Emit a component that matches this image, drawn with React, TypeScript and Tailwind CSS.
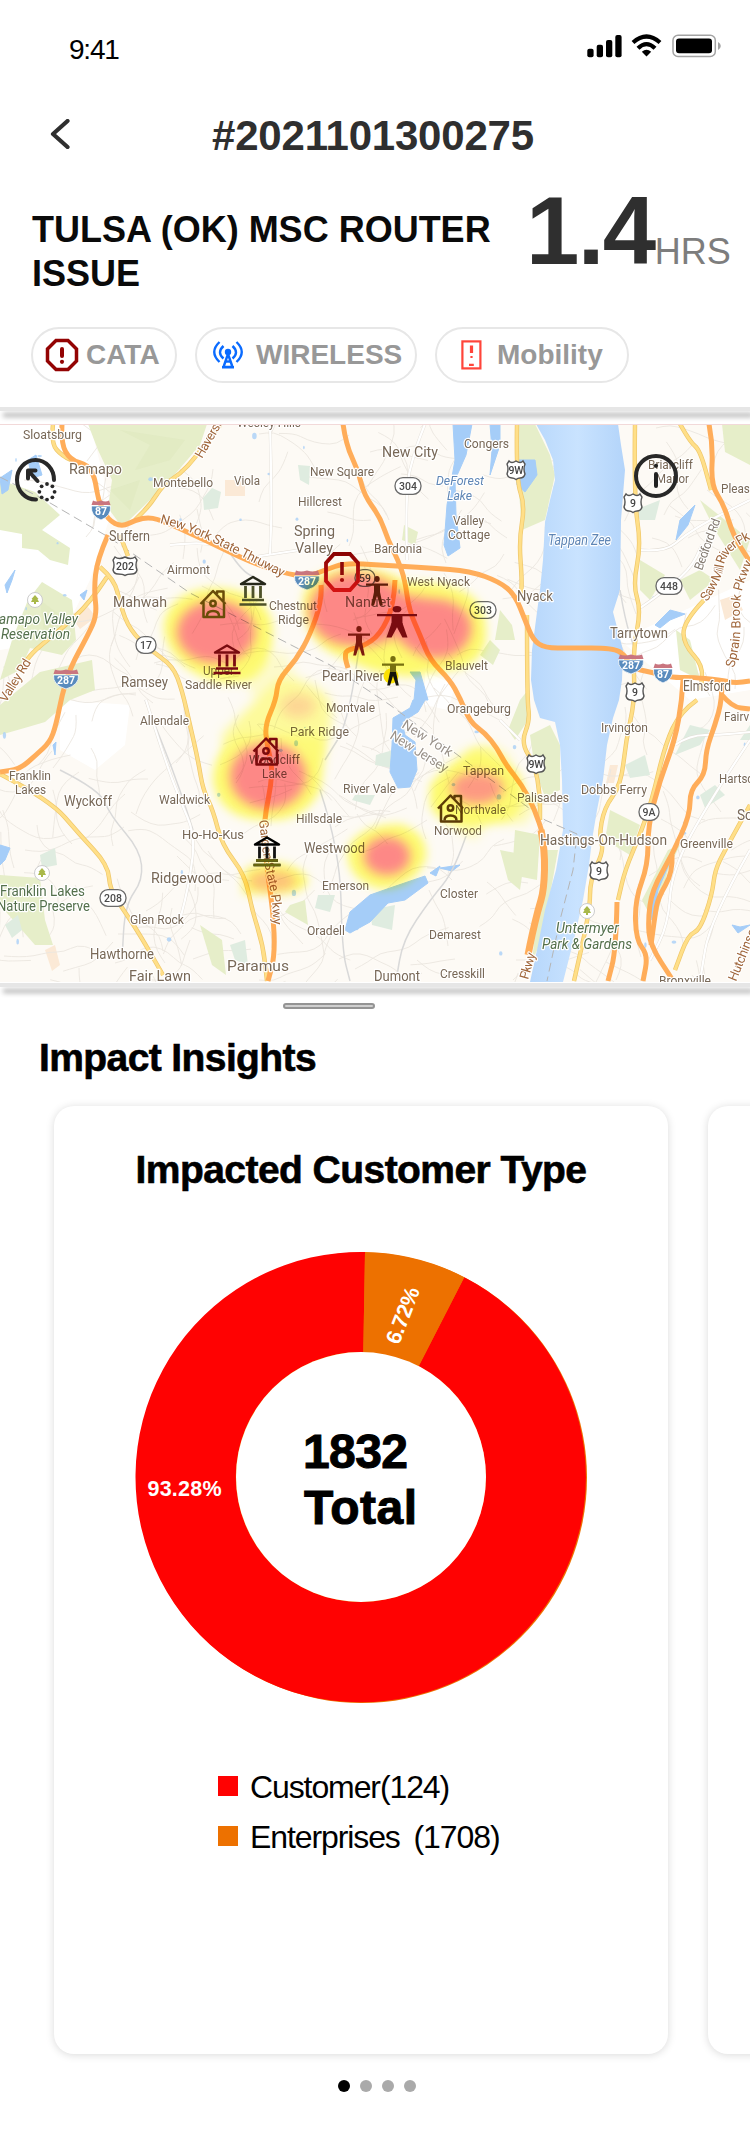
import React from "react";

type Pt = [number, number];

const smooth = (pts: Pt[], close = false) => {
  let d = `M${pts[0][0]} ${pts[0][1]}`;
  for (let i = 1; i < pts.length - 1; i++) {
    const mx = (pts[i][0] + pts[i + 1][0]) / 2;
    const my = (pts[i][1] + pts[i + 1][1]) / 2;
    d += ` Q${pts[i][0]} ${pts[i][1]} ${mx} ${my}`;
  }
  const l = pts[pts.length - 1];
  return d + ` L${l[0]} ${l[1]}` + (close ? "Z" : "");
};

const parse = (s: string): Pt[] => s.split(" ").map((p) => p.split(",").map(Number) as Pt);

const orangeRoads = [
  "62,424 61,443 70,460 88,465 95,478 98,500 108,520 122,527 135,520 150,517 165,522 205,540 250,562 283,573 307,577 325,570 345,563 380,565 430,568 470,571 500,582 515,595 525,620 533,640 545,648 570,648 613,648 625,655 631,668 650,672 675,678 690,677 720,680 735,683 750,681",
  "343,424 346,445 358,470 364,495 380,517 388,540 398,560 405,580 409,610 420,635 430,660 450,680 460,698 470,722 485,733 497,748 506,765 522,785 535,810 543,835",
  "321,585 322,600 310,635 296,660 278,680 276,700 265,725 267,745 272,765 271,785 266,810 264,830 267,870 273,910 275,955 268,981",
  "108,535 97,560 94,590 97,615 88,635 70,668 62,695 56,725 50,742 36,755 20,769 0,772",
  "395,580 394,605 380,635 362,647 346,650 345,658 348,668",
  "709,424 713,445 711,485 724,505 733,535 750,562",
  "683,680 682,700 675,740 660,780 648,825 648,865 635,900 636,940 648,955 643,981",
  "722,682 722,700 715,725 706,750 705,775 690,790 690,815 672,855 652,890 648,920 650,945 672,979",
  "672,855 673,872 658,898 655,915 651,945",
  "617,902 616,950 608,981",
  "722,695 732,707 750,709",
];
const yellowRoads = [
  "53,424 51,443 62,456 80,464",
  "221,424 195,458 180,474 163,485 150,505 135,520",
  "100,567 115,580 120,605 130,630 150,650 173,666 182,690 190,725 198,760 203,790 213,810 222,845 245,875 252,910 263,945 267,981",
  "107,577 90,603 60,630 35,650 25,662",
  "0,774 50,800 80,835 108,865 110,890 125,912 140,935 163,975",
  "517,424 516,480 525,505 519,540 522,580 521,595",
  "527,615 527,700 530,720 521,743 535,765 540,795 540,820",
  "635,424 634,500 641,545 633,585 641,610 633,650 635,700 626,740 621,785 604,808 599,838 604,850 590,880 590,910 574,981",
  "680,424 690,442 700,450 711,490",
  "704,600 683,622 684,645 703,665 701,690",
  "697,700 680,712 665,745 652,800 640,835 625,870 618,900",
  "750,805 725,850 715,870 712,895 700,930 688,935 675,970",
  "120,535 128,556",
];
const whiteRoads = [
  "146,700 165,760 180,800 195,835 190,880 180,920",
  "407,560 405,490 415,450 425,424",
  "640,550 665,552 685,535 710,520 750,500",
  "640,608 655,598 690,570 702,545",
  "675,745 690,735 720,735 750,732",
  "750,740 710,800 672,870 668,925 650,960",
  "170,545 215,540 240,560 260,556 300,550",
  "270,424 272,500 270,555",
  "500,720 520,740",
  "750,850 710,920 700,981",
];
const grayRoads = [
  "225,545 240,570 260,580",
  "145,700 165,750 180,790 193,830",
  "60,770 100,790 110,815 140,850 143,880 125,905 122,960",
  "620,590 625,620 635,650",
  "320,790 340,850 342,950 350,981",
  "468,830 455,870 430,900 403,940 396,981",
  "360,640 350,720 325,760",
];
const greens = [
  "88,424 207,424 200,445 170,480 150,500 122,527 108,508 112,480 98,450",
  "0,480 35,492 60,515 42,530 70,548 68,565 50,560 38,550 22,548 22,534 0,530",
  "28,600 42,582 72,600 76,640 62,655 30,648 20,670 0,680 12,640",
  "40,672 92,660 95,690 70,700 45,722 28,727 0,735 0,705",
  "535,424 550,455 555,475 545,520 522,530 520,505 518,480 516,424",
  "0,875 40,878 45,920 53,945 35,945 0,905",
  "722,424 750,424 750,465 725,452",
  "500,610 512,625 515,640 495,640",
  "530,735 550,725 560,745 560,790 545,797 535,770",
  "515,830 540,835 537,880 512,875",
  "545,850 558,850 542,940 532,960",
  "680,580 700,570 715,580 690,600",
  "500,850 525,855 520,890 508,880",
  "490,640 500,650 493,665 480,655",
  "700,500 750,540 740,570 715,530",
  "668,850 680,845 668,870 655,925 642,900",
  "676,630 690,640 700,680 680,670",
  "640,560 665,575 650,600 640,590",
  "610,810 640,825 630,855 605,840",
  "404,525 418,532 415,545 402,540",
  "290,905 305,900 308,925 285,912",
  "520,700 528,690 528,720 515,740 508,730",
  "200,925 222,940 226,975 212,965",
];
const paleGreens = [
  "203,498 212,488 221,492 218,508 204,510",
  "298,465 310,466 309,485 300,480",
  "376,755 393,750 393,768 375,765",
  "355,795 375,795 370,805 352,800",
  "40,855 55,848 57,865 42,868",
  "5,925 18,915 22,930 12,938",
  "635,510 660,500 655,520 640,520",
  "625,765 645,755 650,775 630,778",
  "690,725 710,730 700,745 675,755",
  "700,795 715,785 725,795 705,808",
  "740,740 750,725 750,740",
  "230,945 245,940 248,965 235,960",
  "318,895 335,895 330,912 315,908",
  "370,910 395,905 392,930 372,925",
];
const lakes = [
  "453,424 472,424 466,455 455,480 456,515 460,548 448,556 444,545 447,505 455,460",
  "490,424 500,424 500,445 490,475 492,450",
  "393,718 410,708 413,700 425,700 418,712 402,722 405,735 415,742 417,770 410,787 398,788 390,772 392,745",
  "345,930 350,912 370,895 390,888 425,876 428,883 405,900 388,903 370,922 350,933",
  "430,873 440,866 436,876",
  "440,868 460,865 452,871",
  "516,460 535,460 537,475 525,492 517,485",
  "28,460 36,455 42,475 32,478",
  "0,478 12,470 8,490 2,494",
  "0,845 10,848 5,860 0,865",
  "655,625 670,610 685,614 670,620 660,628",
  "680,520 695,505 688,525 676,540",
  "665,865 670,862 658,890 652,920 650,905",
  "414,700 416,680 410,672 420,672 428,700",
  "732,925 740,927 750,925 738,933",
  "5,585 15,570 12,580 7,593",
  "80,595 87,590 84,600",
  "53,745 56,742 55,755",
];

const town = "#786857";
const blueText = "#5f86b5";
const greenText = "#54704c";
type Label = [string, number, number, number, number, string?, boolean?];
const labels: Label[] = [
  ["Sloatsburg", 23, 439, 59, 12.5], ["Ramapo", 69, 474, 53, 15], ["Montebello", 153, 487, 60, 12.5],
  ["Viola", 234, 485, 26, 12.5], ["Suffern", 109, 541, 41, 14], ["Airmont", 167, 574, 43, 12.5],
  ["Mahwah", 113, 607, 54, 15], ["Ramapo Valley", -9, 624, 87, 14, greenText, true],
  ["Reservation", 1, 639, 69, 14, greenText, true], ["Ramsey", 121, 687, 47, 14],
  ["Upper", 203, 675, 31, 12.5], ["Saddle River", 185, 689, 67, 12.5], ["Allendale", 140, 725, 49, 12.5],
  ["Franklin", 9, 780, 42, 12.5], ["Lakes", 15, 794, 31, 12.5], ["Wyckoff", 64, 806, 48, 14],
  ["Waldwick", 159, 804, 51, 13], ["Ho-Ho-Kus", 182, 839, 62, 13], ["Ridgewood", 151, 883, 71, 15],
  ["Franklin Lakes", 0, 896, 85, 14, greenText], ["Nature Preserve", -3, 911, 93, 14, greenText],
  ["Glen Rock", 130, 924, 54, 13], ["Hawthorne", 90, 959, 64, 14], ["Fair Lawn", 129, 981, 62, 14],
  ["Paramus", 227, 971, 62, 15.5], ["Wesley Hills", 237, 427, 64, 12.5], ["New City", 382, 457, 56, 15],
  ["New Square", 310, 476, 64, 13], ["Congers", 464, 448, 45, 13], ["Hillcrest", 298, 506, 44, 13],
  ["Spring", 294, 536, 41, 15], ["Valley", 295, 553, 38, 15],
  ["DeForest", 436, 485, 48, 13, blueText, true], ["Lake", 447, 500, 25, 13, blueText, true],
  ["Valley", 453, 525, 31, 13], ["Cottage", 448, 539, 42, 13], ["Bardonia", 374, 553, 48, 12.5],
  ["West Nyack", 407, 586, 63, 13], ["Chestnut", 269, 610, 48, 13], ["Ridge", 278, 624, 31, 13],
  ["Nanuet", 345, 607, 46, 14.5], ["Pearl River", 322, 681, 62, 14], ["Blauvelt", 445, 670, 43, 13],
  ["Briarcliff", 648, 469, 45, 13], ["Manor", 656, 483, 33, 13], ["Pleasantville", 721, 493, 66, 13],
  ["Tappan Zee", 548, 545, 63, 14, blueText, true], ["Nyack", 517, 601, 36, 14.5], ["Tarrytown", 610, 638, 58, 14.5],
  ["Elmsford", 683, 691, 48, 14], ["Montvale", 326, 712, 49, 12.5], ["Park Ridge", 290, 736, 59, 13],
  ["Woodcliff", 249, 764, 51, 13], ["Lake", 262, 778, 25, 13], ["River Vale", 343, 793, 53, 13],
  ["Hillsdale", 296, 823, 46, 13], ["Westwood", 304, 853, 61, 14], ["Emerson", 322, 890, 47, 13],
  ["Oradell", 307, 935, 38, 13], ["Dumont", 374, 981, 46, 14], ["Demarest", 429, 939, 52, 13],
  ["Cresskill", 440, 978, 45, 13], ["Closter", 440, 898, 38, 13], ["Norwood", 434, 835, 48, 13],
  ["Northvale", 455, 814, 51, 13], ["Tappan", 463, 775, 41, 13], ["Orangeburg", 447, 713, 64, 13],
  ["Palisades", 517, 802, 52, 12.5], ["Irvington", 601, 732, 47, 13], ["Dobbs Ferry", 581, 794, 66, 13.5],
  ["Hastings-On-Hudson", 540, 845, 127, 14], ["Greenville", 680, 848, 53, 13], ["Fairview", 724, 721, 43, 13],
  ["Hartsdale", 719, 783, 50, 13], ["Scarsdale", 737, 820, 60, 14.5], ["Untermyer", 556, 933, 63, 14, greenText, true],
  ["Park & Gardens", 542, 949, 90, 14, greenText, true], ["Bronxville", 659, 985, 52, 13],
];

const rnd = (() => {
  let s = 91;
  return () => ((s = (s * 16807) % 2147483647) / 2147483647);
})();
const streets = Array.from({ length: 330 }, () => {
  let x = rnd() * 770 - 10;
  let y = 415 + rnd() * 570;
  if (x < 95 && y < 640) x += 120;
  let a = rnd() * 6.28;
  const pts: Pt[] = [[x, y]];
  const n = 3 + Math.floor(rnd() * 5);
  for (let i = 0; i < n; i++) {
    a += (rnd() - 0.5) * 1.3;
    x += Math.cos(a) * 15;
    y += Math.sin(a) * 15;
    pts.push([Math.round(x), Math.round(y)]);
  }
  return smooth(pts);
}).join(" ");
const ponds = Array.from({ length: 45 }, () => [rnd() * 750, 430 + rnd() * 545, 0.8 + rnd() * 1.6, 1 + rnd() * 2.4]);

const Us = ({ x, y, n }: { x: number; y: number; n: string }) => {
  const w = n.length > 2 ? 12 : 9;
  return (
    <g transform={`translate(${x} ${y})`}>
      <path
        d={`M${-w + 2} -9 Q${-w / 2} -6 0 -9 Q${w / 2} -6 ${w - 2} -9 L${w} -6 Q${w - 2} -1 ${w} 4 Q${w - 1} 8 ${w - 5} 8 Q2 8 0 9.5 Q-2 8 ${-w + 5} 8 Q${-w + 1} 8 ${-w} 4 Q${-w + 2} -1 ${-w} -6Z`}
        fill="#fff" stroke="#555" strokeWidth="1.4"
      />
      <text y="4" textAnchor="middle" fontSize="10.5" fontWeight="500" fill="#444">{n}</text>
    </g>
  );
};
const Oval = ({ x, y, n }: { x: number; y: number; n: string }) => {
  const w = n.length > 2 ? 13 : 10;
  return (
    <g transform={`translate(${x} ${y})`}>
      <rect x={-w} y="-8.3" width={w * 2} height="16.6" rx="8" fill="#fff" stroke="#6a6a6a" strokeWidth="1.3" />
      <text y="3.8" textAnchor="middle" fontSize="10.5" fontWeight="500" fill="#4a4a4a">{n}</text>
    </g>
  );
};
const Interstate = ({ x, y, n }: { x: number; y: number; n: string }) => {
  const w = n.length > 2 ? 12.5 : 9.5;
  return (
    <g transform={`translate(${x} ${y})`}>
      <path d={`M${-w} -4 H${w} Q${w + 1} 6 0 10 Q${-w - 1} 6 ${-w} -4Z`} fill="#5a8cbe" stroke="#fff" strokeWidth="0.8" />
      <path d={`M${-w} -5 L${-w + 1.5} -9.5 Q${-w / 2} -7.5 0 -9.5 Q${w / 2} -7.5 ${w - 1.5} -9.5 L${w} -5Z`} fill="#c9757f" />
      <text y="5" textAnchor="middle" fontSize="10.5" fontWeight="700" fill="#fff">{n}</text>
    </g>
  );
};

const House = ({ x, y, c }: { x: number; y: number; c: string }) => (
  <g transform={`translate(${x} ${y})`} fill="none" stroke={c} strokeWidth="2.5">
    <path d="M0.5 15 L13 2 L25.500 15 M3.5 12.5 V28 H24 V12.5 M17 5 V2.5 H23.5 V12" strokeLinejoin="round" />
    <circle cx="13" cy="14.5" r="2.7" />
    <path d="M7 27 Q7 22 13 22 Q19 22 19 27" />
  </g>
);
const Bank = ({ x, y, c, roof }: { x: number; y: number; c: string; roof: string }) => (
  <g transform={`translate(${x} ${y})`}>
    <path d="M2 9 L14 2 L26 9Z" fill="none" stroke={roof} strokeWidth="2.4" strokeLinejoin="round" />
    <path d="M6.5 11 V23 M14 11 V23 M21.5 11 V23" stroke={c} strokeWidth="2.8" />
    <path d="M3 25 H25 M0.5 29.5 H27.5" stroke={c} strokeWidth="2.4" />
  </g>
);
const Person = ({ x, y, w, h, c, leg }: { x: number; y: number; w: number; h: number; c: string; leg?: string }) => (
  <svg x={x - w / 2} y={y} width={w} height={h} viewBox="0 0 22 30" preserveAspectRatio="none">
    <ellipse cx="11" cy="3" rx={w > 30 ? 2.4 : 2.7} ry="2.9" fill={c} />
    <path d="M0 7.6 H22 V9.7 H14 V17 H8 V9.7 H0Z" fill={c} />
    <path d="M8 16 H14 L16.800 29.5 H14 L11 20 L8 29.5 H5.2Z" fill={leg || c} />
  </svg>
);

const MapArt = () => (
  <svg className="isolate block h-[558px] w-[750px]" viewBox="0 424 750 558" fontFamily="Roboto, sans-serif">
    <defs>
      <filter id="b4" x="-30%" y="-30%" width="160%" height="160%"><feGaussianBlur stdDeviation="5" /></filter>
      <filter id="b6" x="-50%" y="-50%" width="200%" height="200%"><feGaussianBlur stdDeviation="5.5" /></filter>
      <linearGradient id="river" x1="0" x2="1" y1="0" y2="0">
        <stop offset="0" stopColor="#b7d7fb" /><stop offset="0.5" stopColor="#c9e3ff" /><stop offset="1" stopColor="#b3d4fa" />
      </linearGradient>
      <linearGradient id="alert" x1="0" x2="0" y1="0" y2="1">
        <stop offset="0" stopColor="#8a0303" /><stop offset="1" stopColor="#d31212" />
      </linearGradient>
      <path id="thruway" d="M160 523 Q185 529 212 542 T284 578" />
      <path id="garden" d="M259 820 Q263 860 268 880 T273 926" />
      <path id="saw" d="M707 602 Q722 580 724 565 T753 538" />
      <path id="sprain" d="M734 668 Q742 640 740 615 T754 560" />
    </defs>
    <rect x="0" y="424" width="750" height="558" fill="#fdfaf5" />
    <path d="M0 424 H90 L112 510 L90 580 L60 640 L0 650Z M60 700 L130 705 L125 745 L95 770 L60 750Z M620 640 L750 580 V690 L690 700Z M425 672 L455 685 L448 710 L425 705Z" fill="#fff" />
    <path d="M225 480 h20 v16 h-20z M70 615 l18 -8 l8 10 l-16 12z M720 600 l15 -5 l8 15 l-18 10z M45 950 l10 -5 l5 20 l-8 6z M610 765 l8 0 l-4 18 l-8 0z" fill="#fbe9d6" />
    <path d={streets} fill="none" stroke="#ebe7e0" strokeWidth="0.9" />
    {greens.map((g) => <polygon key={g} points={g} fill="#e6eec9" />)}
    {paleGreens.map((g) => <polygon key={g} points={g} fill="#dfece0" />)}
    <path d="M120 430 L150 445 L135 470 L170 460 L185 440Z M110 490 L140 480 L130 510Z M40 600 L60 615 L45 640Z" fill="#dde8bd" opacity="0.5" />
    {ponds.map((p, i) => <ellipse key={i} cx={p[0]} cy={p[1]} rx={p[2]} ry={p[3]} fill="#a9cff7" opacity="0.8" />)}
    {lakes.map((l) => <polygon key={l} points={l} fill="#a5cdf8" strokeLinejoin="round" stroke="#a5cdf8" />)}
    <polygon
      points="536,424 545,440 553,460 555,480 550,500 545,522 543,560 540,590 537,612 534,635 532,650 531,680 534,700 540,718 555,722 560,745 562,780 563,830 556,870 545,910 537,950 530,982 563,982 575,935 583,900 589,865 592,840 597,810 603,780 607,745 613,718 619,700 622,680 623,650 613,612 620,590 621,520 625,470 621,445 618,424"
      fill="url(#river)"
    />
    {grayRoads.map((r) => <path key={r} d={smooth(parse(r))} fill="none" stroke="#d9d9d9" strokeWidth="1.5" />)}
    {whiteRoads.map((r) => <path key={r} d={smooth(parse(r))} fill="none" stroke="#e3ded6" strokeWidth="3" />)}
    {whiteRoads.map((r) => <path key={r + "w"} d={smooth(parse(r))} fill="none" stroke="#fff" strokeWidth="2.2" />)}
    <path d="M0 477 L45 500 L110 538 L190 593 L330 665 L390 705 L455 753 L545 820 L577 834 L573 870 L560 920 L547 981" fill="none" stroke="#b5b5b5" strokeWidth="1" strokeDasharray="9 5" />
    {yellowRoads.map((r) => <path key={r} d={smooth(parse(r))} fill="none" stroke="#efc76a" strokeWidth="4.4" />)}
    {yellowRoads.map((r) => <path key={r + "i"} d={smooth(parse(r))} fill="none" stroke="#ffdf88" strokeWidth="3" />)}
    {orangeRoads.map((r) => <path key={r} d={smooth(parse(r))} fill="none" stroke="#ffad5a" strokeWidth="5" strokeLinejoin="round" />)}
    <path d={smooth(parse("541,830 545,850 544,890 538,910 532,935 528,955"))} fill="none" stroke="#ffad5a" strokeWidth="7" />

    <g stroke="#fff" strokeWidth="2.4" paintOrder="stroke" strokeLinejoin="round">
      {labels.map(([t, x, y, w, s, c, it], i) => (
        <text key={i} x={x} y={y} fontSize={s} textLength={w} lengthAdjust="spacingAndGlyphs" fill={c || town} fontStyle={it ? "italic" : "normal"}>{t}</text>
      ))}
      <g fill="#9a928a" fontSize="13.5">
        <text transform="translate(401 727) rotate(32)" textLength="57">New York</text>
        <text transform="translate(389 738) rotate(32)" textLength="66">New Jersey</text>
      </g>
      <g fill="#a0673c" fontSize="13">
        <text><textPath href="#thruway" textLength="134">New York State Thruway</textPath></text>
        <text><textPath href="#garden" textLength="106">Garden State Pkwy</textPath></text>
        <text><textPath href="#saw" textLength="80">Saw Mill River Pk</textPath></text>
        <text><textPath href="#sprain" textLength="108">Sprain Brook Pkwy</textPath></text>
        <text transform="translate(202 459) rotate(-60)" textLength="60">Haverstraw</text>
        <text transform="translate(6 703) rotate(-58)" textLength="48">Valley Rd</text>
        <text transform="translate(528 980) rotate(-74)" textLength="27">Pkwy</text>
        <text transform="translate(736 982) rotate(-68)" textLength="62">Hutchinson</text>
      </g>
      <text transform="translate(702 571) rotate(-70)" fontSize="12.5" fill="#857c72" textLength="54">Bedford Rd</text>
    </g>

    <Us x={125} y={566} n="202" /><Us x={516} y={470} n="9W" /><Us x={633} y={503} n="9" />
    <Us x={635} y={692} n="9" /><Us x={536} y={764} n="9W" /><Us x={599} y={871} n="9" />
    <Oval x={146} y={645} n="17" /><Oval x={113} y={898} n="208" /><Oval x={408} y={486} n="304" />
    <Oval x={365} y={578} n="59" /><Oval x={483} y={610} n="303" /><Oval x={669} y={586} n="448" /><Oval x={649} y={812} n="9A" />
    <Interstate x={101} y={510} n="87" /><Interstate x={66} y={679} n="287" /><Interstate x={307} y={580} n="287" />
    <Interstate x={631} y={664} n="287" /><Interstate x={663} y={673} n="87" />
    {[[35, 600], [42, 873], [587, 911]].map(([x, y]) => (
      <g key={x}>
        <circle cx={x} cy={y} r="7.5" fill="#fff" stroke="#ccc" />
        <path d={`M${x} ${y - 5} l3.5 4 l-1 0 l1.5 3 h-3 v2 h-2 v-2 h-3 l1.5 -3 l-1 0Z`} fill="#a9b84a" />
      </g>
    ))}

    <g className="opacity-95 mix-blend-multiply">
      <g filter="url(#b4)" fill="#ffff6a">
        <path d="M164 625 Q168 592 212 588 Q262 588 272 622 Q276 665 250 680 Q220 690 190 670 Q164 650 164 625Z" />
        <path d="M303 600 Q306 572 350 567 Q385 568 408 583 Q445 580 470 595 Q490 610 485 645 Q478 670 440 671 L408 677 Q365 672 345 658 Q303 645 303 600Z" />
        <path d="M213 782 Q212 752 240 735 H322 Q325 765 320 790 Q305 822 266 820 Q220 820 213 782Z" />
        <path d="M348 848 Q360 824 400 824 Q428 832 426 858 Q415 888 380 889 Q345 880 348 848Z" />
        <path d="M430 785 Q445 765 475 748 Q505 750 522 780 Q530 812 505 822 L470 828 Q438 825 430 805Z" />
        <path d="M243 872 Q260 858 285 864 Q305 870 308 880 Q306 893 280 894 H243Z" />
      </g>
      <g filter="url(#b6)" fill="#ffff7a" fillOpacity="0.75">
        <path d="M222 735 Q250 705 278 680 Q310 675 330 700 Q335 725 322 760 H225Z" />
        <path d="M240 670 L285 650 L298 680 L255 700Z" fillOpacity="0.35" />
        <path d="M450 825 L475 840 L485 822Z M505 790 L540 800 L525 825 L500 822Z M455 755 L490 743 L515 760Z" fillOpacity="0.5" />
      </g>
      <g filter="url(#b6)" fill="#ff8585">
        <ellipse cx="216" cy="632" rx="39" ry="31" />
        <path d="M309 612 Q312 582 345 573 Q385 573 402 594 Q420 598 445 600 Q475 610 471 634 Q462 660 430 658 Q405 650 396 636 Q370 652 335 643 Q312 635 309 612Z" />
        <ellipse cx="268" cy="776" rx="38" ry="33" />
        <ellipse cx="387" cy="856" rx="23" ry="19" />
        <ellipse cx="477" cy="788" rx="26" ry="16" fillOpacity="0.85" />
        <ellipse cx="272" cy="881" rx="24" ry="10" fillOpacity="0.5" />
        <ellipse cx="298" cy="706" rx="17" ry="12" fillOpacity="0.3" />
      </g>
    </g>

    <House x={200} y={589} c="#6a4c08" />
    <House x={253} y={736.5} c="#7c0a0c" />
    <House x={437.5} y={793.5} c="#5c3c06" />
    <Bank x={239} y={575} c="#4e5228" roof="#26271a" />
    <Bank x={213} y={643.5} c="#7a0b10" roof="#7a0b10" />
    <g>
      <Bank x={253} y={835.5} c="#111" roof="#000" />
      <path d="M256 860.5 H278 M253.5 865 H280.5" stroke="#67660d" strokeWidth="2.4" />
    </g>
    <circle cx="391" cy="676" r="7.5" fill="#fbe000" />
    <Person x={377} y={576} w={22} h={30} c="#5d1d0a" />
    <Person x={397} y={606} w={40} h={32} c="#7a0c10" />
    <Person x={359} y={626} w={22} h={30} c="#7c1a0e" />
    <Person x={393} y={656} w={22} h={30} c="#77700f" leg="#14140a" />
    <path d="M334 554 H350 L358 563 V581 L350 590 H334 L326 581 V563Z" fill="none" stroke="url(#alert)" strokeWidth="3.8" />
    <path d="M342 562 V575" stroke="#8d0808" strokeWidth="3.6" /><circle cx="342" cy="580" r="2.1" fill="#a60b0b" />

    <g fill="none" stroke="#282828" strokeWidth="4" strokeLinecap="round" strokeLinejoin="round">
      <path d="M36 499.5 A18.5 19.8 0 1 1 54 480" />
      <path d="M28 478.5 V470.5 H35.5 M29 471.5 L37.5 481" />
    </g>
    {Array.from({ length: 8 }, (_, i) => (
      <circle key={i} cx={47 + 7.6 * Math.cos((i * Math.PI) / 4)} cy={491.8 + 7.8 * Math.sin((i * Math.PI) / 4)} r="1.9" fill="#282828" />
    ))}
    <circle cx="656" cy="476" r="20" fill="none" stroke="#282828" strokeWidth="4" />
    <circle cx="656" cy="465.8" r="2.1" fill="#222" />
    <path d="M656 474 V486" stroke="#222" strokeWidth="4" strokeLinecap="round" />
    <path d="M0 424.5 H750" stroke="#f2d9d9" />
  </svg>
);

const Donut = () => (
  <svg className="block h-[454px] w-[454px]" viewBox="134 1250 454 454" fontFamily="'Liberation Sans', sans-serif">
    <circle cx="361.8" cy="1477.8" r="225.2" fill="#ed7100" />
    <path fill="#ff0202" d="M365 1252 A225.2 225.2 0 1 0 464.3 1277.2 L418.7 1366.2 A125 125 0 1 1 363.3 1352Z" />
    <path d="M363.3 1352 L365 1252 A225 225 0 0 1 464.3 1277.2 L418.7 1366.2Z" fill="#ed7100" />
    <circle cx="361" cy="1477" r="125" fill="#fff" />
    <g fontWeight="700" fontSize="48" stroke="#000" strokeWidth="1">
      <text x="303" y="1468.3" textLength="105">1832</text>
      <text x="304" y="1524" textLength="113">Total</text>
    </g>
    <g fontWeight="700" fontSize="21.5" fill="#fff">
      <text x="147.5" y="1496" textLength="74">93.28%</text>
      <text transform="translate(399 1345.5) rotate(-69)" textLength="59">6.72%</text>
    </g>
  </svg>
);

const Chip = ({ className, children }: { className: string; children: React.ReactNode }) => (
  <div className={`flex h-[56px] items-center rounded-full border-2 border-[#e7e7e7] text-[28px] leading-[32px] font-bold text-[#989898] ${className}`}>{children}</div>
);

const Divider = () => <div className="h-[4px] w-full shrink-0 bg-[#e6e6e6] shadow-[3px_6px_5px_rgba(0,0,0,0.3)]" />;

export default function App() {
  return (
    <div className="flex h-[2148px] w-[750px] flex-col overflow-hidden bg-white font-['Liberation_Sans',Arial,sans-serif] text-black">
      <div className="flex h-[88px] shrink-0 items-start justify-between pt-[34px] pr-[29px] pl-[69px]">
        <span className="pt-[2px] text-[28px] leading-[28px] tracking-[-1.2px]">9:41</span>
        <svg className="h-[24px] w-[135px]" viewBox="586 34 135 24">
          <rect x="587.3" y="48.8" width="6.3" height="8.4" rx="2" />
          <rect x="596.7" y="44.8" width="6.3" height="12.4" rx="2" />
          <rect x="606" y="40" width="6.3" height="17.2" rx="2" />
          <rect x="615.3" y="35" width="6.3" height="22.2" rx="2" />
          <g fill="none" stroke="#000" strokeWidth="4.2">
            <path d="M633 42.5 Q646.500 30.500 660 42.500" />
            <path d="M638 48.3 Q646.500 40 655 48.300" />
          </g>
          <path d="M641.8 51.8 Q646.500 47.800 651.200 51.800 L646.500 56.500Z" />
          <rect x="673" y="35.3" width="42.3" height="21.2" rx="5" fill="none" stroke="#a3a3a3" strokeWidth="1.5" />
          <rect x="676" y="38.5" width="36" height="14.8" rx="3" />
          <path d="M718 42 Q720.8 43.3 720.8 46 Q720.8 48.7 718 50Z" fill="#a3a3a3" />
        </svg>
      </div>
      <div className="flex h-[95px] shrink-0 items-start pt-[24px] pl-[49px]">
        <svg className="mt-[7px] h-[30px] w-[24px]" viewBox="49 119 24 30" fill="none" stroke="#2f2f2f" strokeWidth="4.2" strokeLinecap="round" strokeLinejoin="round">
          <path d="M67.5 121 L53 134 L67.500 147" />
        </svg>
        <h1 className="ml-[139px] text-[42px] leading-[48px] font-bold tracking-[-0.2px] text-[#2f2f2f]">#2021101300275</h1>
      </div>
      <div className="flex h-[144px] shrink-0 items-start pl-[32px]">
        <h2 className="w-[494px] pt-[25px] text-[36px] leading-[44px] font-bold text-[#0a0a0a]">TULSA (OK) MSC ROUTER ISSUE</h2>
        <div className="flex items-baseline">
          <span className="text-[96px] leading-[96px] font-bold tracking-[-1.6px] text-[#2f2f2f]">1.4</span>
          <span className="text-[36px] text-[#7d7d7d]">HRS</span>
        </div>
      </div>
      <div className="flex h-[80px] shrink-0 items-start gap-[18px] pl-[31px]">
        <Chip className="w-[146px] gap-[7px] pl-[12px]">
          <svg className="h-[34px] w-[34px] shrink-0" viewBox="0 0 34 34">
            <path d="M11 2.5 H23 L31.5 11 V23 L23 31.5 H11 L2.5 23 V11Z" fill="none" stroke="#930303" strokeWidth="3.5" />
            <path d="M17 11 V18" stroke="#930303" strokeWidth="4" strokeLinecap="round" />
            <circle cx="17" cy="23.8" r="2.1" fill="#930303" />
          </svg>
          CATA
        </Chip>
        <Chip className="w-[222px] gap-[12px] pl-[15px]">
          <svg className="h-[30px] w-[32px] shrink-0" viewBox="0 0 32 30" fill="none" stroke="#0a6bff" strokeWidth="2.4">
            <path d="M7.5 2 Q-3 12 7.5 22 M24.5 2 Q35 12 24.5 22" />
            <path d="M11.5 6 Q4.5 12.5 11.5 18.5 M20.5 6 Q27.5 12.5 20.5 18.5" />
            <circle cx="16" cy="12" r="3.2" fill="#0a6bff" stroke="none" />
            <path d="M16 14 L11.5 27 H20.5Z M10 27.3 H22" strokeLinejoin="round" />
            <path d="M13.5 21.5 H18.5" />
          </svg>
          WIRELESS
        </Chip>
        <Chip className="w-[194px] gap-[15px] pl-[24px]">
          <svg className="h-[30px] w-[21px] shrink-0" viewBox="0 0 21 30" fill="none" stroke="#ff453a" strokeWidth="2.2">
            <rect x="1.4" y="1.4" width="18" height="27" />
            <path d="M10.5 5.5 V13" strokeWidth="3.2" />
            <path d="M10.5 16 V18 M8 24.8 H12.8" />
          </svg>
          Mobility
        </Chip>
      </div>
      <Divider />
      <div className="h-[572px] shrink-0 pt-[13px]"><MapArt /></div>
      <Divider />
      <div className="h-[51px] shrink-0 pt-[16px] pl-[283px]">
        <div className="h-[6px] w-[92px] rounded-full border-2 border-[#949494] bg-[#cfcfcf]" />
      </div>
      <h2 className="h-[68px] shrink-0 pl-[39px] text-[39px] leading-[40px] font-bold tracking-[-0.6px] [-webkit-text-stroke:0.6px_#000]">Impact Insights</h2>
      <div className="flex h-[948px] shrink-0 gap-[40px] pl-[54px]">
        <section className="flex w-[614px] shrink-0 flex-col items-center rounded-[20px] bg-white pt-[44px] shadow-[0_1px_9px_rgba(0,0,0,0.15)]">
          <h3 className="h-[100px] text-[39px] leading-[40px] font-bold tracking-[-0.55px] [-webkit-text-stroke:0.6px_#000]">Impacted Customer Type</h3>
          <Donut />
          <ul className="mt-[58px] w-[286px]">
            <li className="flex h-[50px] items-center gap-[12px] text-[32px] leading-[50px] tracking-[-1.1px]">
              <i className="-mt-[2px] h-[20px] w-[20px] bg-[#ff0202]" />Customer(124)
            </li>
            <li className="flex h-[50px] items-center gap-[12px] text-[32px] leading-[50px] tracking-[-1.1px] [word-spacing:6px]">
              <i className="-mt-[2px] h-[20px] w-[20px] bg-[#ed7100]" />Enterprises (1708)
            </li>
          </ul>
        </section>
        <section className="w-[614px] shrink-0 rounded-[20px] bg-white shadow-[0_1px_9px_rgba(0,0,0,0.15)]" />
      </div>
      <div className="mt-[26px] flex gap-[10px] pl-[338px]">
        <i className="h-[12px] w-[12px] rounded-full bg-black" />
        <i className="h-[12px] w-[12px] rounded-full bg-[#aaa]" />
        <i className="h-[12px] w-[12px] rounded-full bg-[#aaa]" />
        <i className="h-[12px] w-[12px] rounded-full bg-[#aaa]" />
      </div>
    </div>
  );
}
